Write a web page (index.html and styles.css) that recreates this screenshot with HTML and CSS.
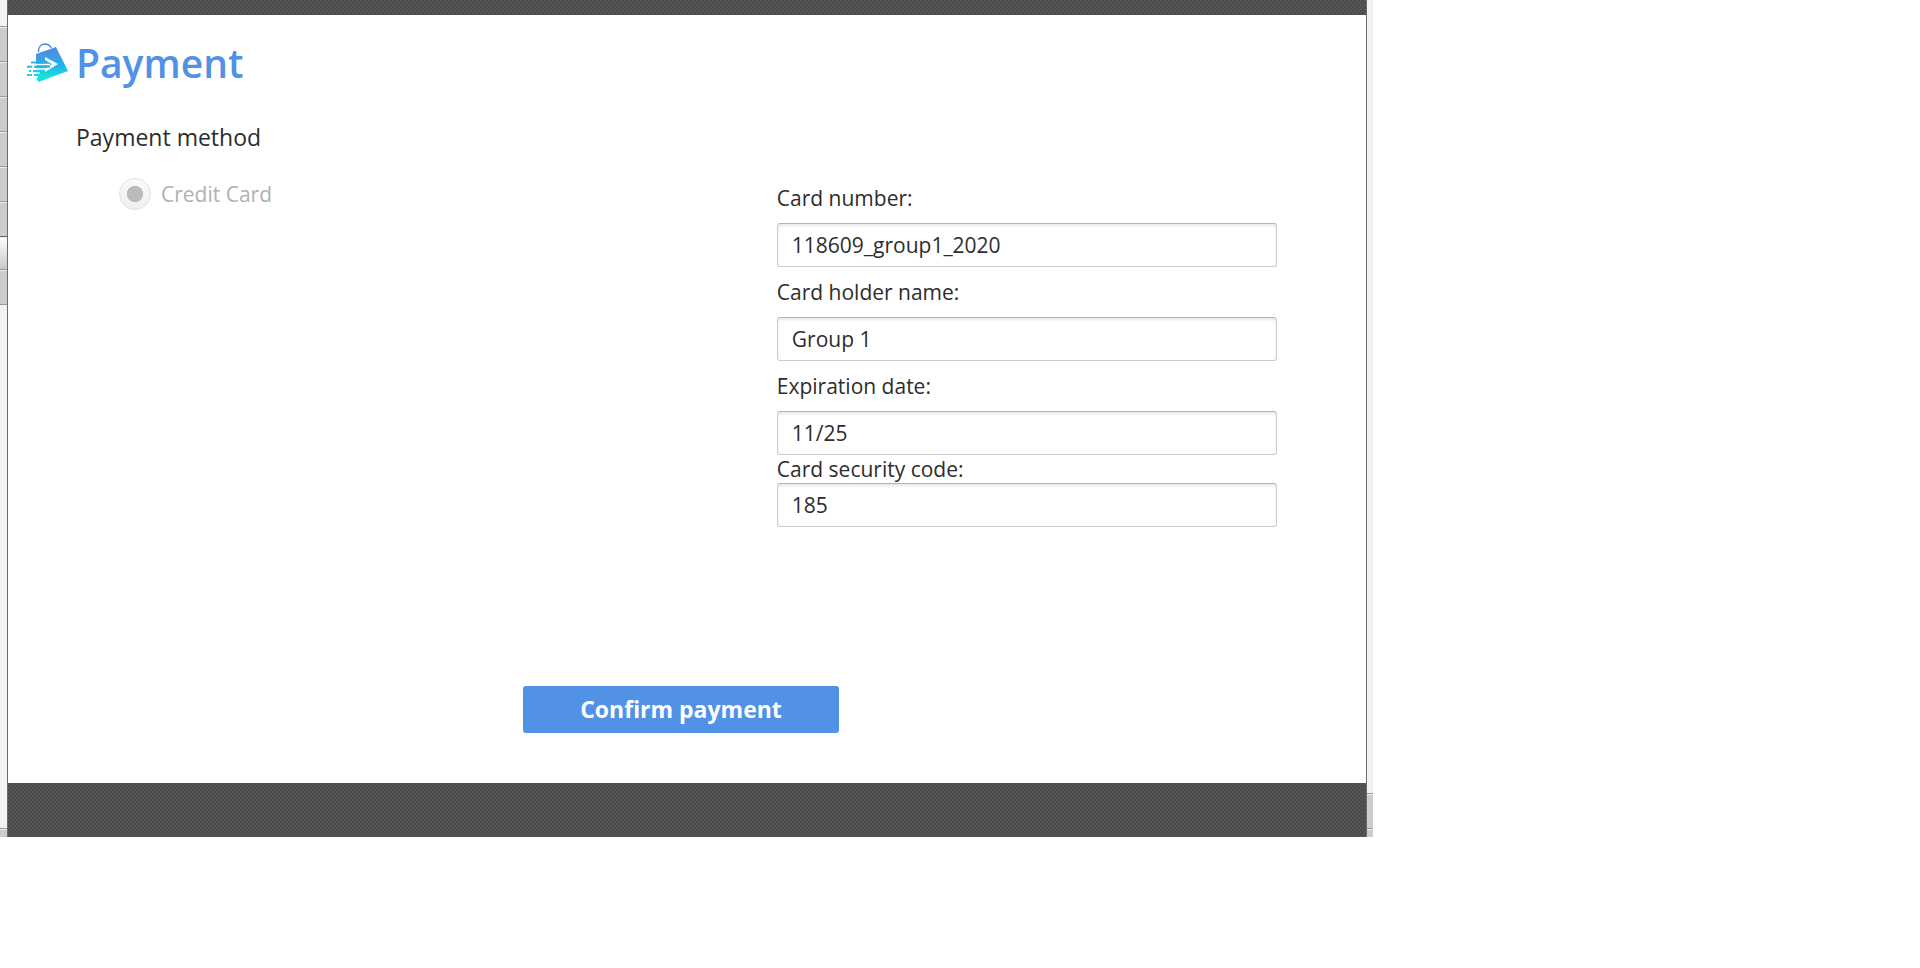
FILE: index.html
```html
<!DOCTYPE html>
<html lang="en">
<head>
<meta charset="utf-8">
<title>Payment</title>
<link rel="stylesheet" href="styles.css">
</head>
<body>
<div class="window">
  <div class="strip strip-left" aria-hidden="true">
    <div class="blank blank-top"></div>
    <div class="cell"></div>
    <div class="cell"></div>
    <div class="cell"></div>
    <div class="cell"></div>
    <div class="cell"></div>
    <div class="cell"></div>
    <div class="cell cell-active"></div>
    <div class="cell"></div>
    <div class="blank blank-fill"></div>
    <div class="cell cell-last"></div>
  </div>
  <main class="panel">
    <div class="bar bar-top"></div>
    <form class="content">
      <header class="header">
        <svg class="logo" viewBox="0 0 42 40" aria-hidden="true">
          <defs>
            <linearGradient id="bag" x1="0" y1="0" x2="0" y2="1">
              <stop offset="0.15" stop-color="#4d8fe6"/>
              <stop offset="0.55" stop-color="#22b4e8"/>
              <stop offset="0.85" stop-color="#1ae0e0"/>
            </linearGradient>
          </defs>
          <path d="M12.500 9C12 4.500 15 1 18.500 1C21.500 1 24 2.500 25.500 5" fill="none" stroke="#4486e0" stroke-width="1.300"/>
          <path d="M10 11L30 4L42 28L12.500 39L10 35Z" fill="url(#bag)"/>
          <path d="M19 14L32 21L19 29L19 26L26 21L19 17Z" fill="#fff"/>
          <path d="M9 21.500H24M7 26H20M8 30H14M6 34H12" stroke="#fff" stroke-width="1.400"/>
          <path d="M5 19.500H21" stroke="#28aee8" stroke-width="1.800"/>
          <path d="M1 23.700H6M8 23.700H24" stroke="#22bde6" stroke-width="2"/>
          <path d="M3 28H5M7 28H19" stroke="#1fcfe2" stroke-width="2"/>
          <path d="M1 32H6M8 32H16" stroke="#1fd8de" stroke-width="2"/>
        </svg>
        <h1 class="title">Payment</h1>
      </header>
      <div class="columns">
        <fieldset class="method">
          <legend class="method-title">Payment method</legend>
          <label class="option">
            <input class="radio" type="radio" name="method" checked disabled>
            <span>Credit Card</span>
          </label>
        </fieldset>
        <div class="fields">
          <label class="label" for="number">Card number:</label>
          <input class="input" id="number" type="text" value="118609_group1_2020">
          <label class="label" for="holder">Card holder name:</label>
          <input class="input" id="holder" type="text" value="Group 1">
          <label class="label" for="expiry">Expiration date:</label>
          <input class="input" id="expiry" type="text" value="11/25">
          <label class="label label-tight" for="code">Card security code:</label>
          <input class="input" id="code" type="text" value="185">
        </div>
      </div>
      <button class="confirm" type="button">Confirm payment</button>
    </form>
    <div class="bar bar-bottom"></div>
  </main>
  <div class="strip strip-right" aria-hidden="true">
    <div class="blank blank-fill"></div>
    <div class="cell"></div>
    <div class="cell cell-last"></div>
  </div>
</div>
</body>
</html>
```
FILE: styles.css
```css
* { box-sizing: border-box; }

body {
  margin: 0;
  background: #fff;
  color: #2d2d2d;
  font-family: "Open Sans", "Noto Sans", sans-serif;
  font-size: 21px;
}

.window {
  display: grid;
  grid-template-columns: 7px 1fr 6px;
  width: 71.5%;
}

.strip {
  display: flex;
  flex-direction: column;
}

.blank { background: #f2f2f2; }
.blank-top { height: 26px; }
.blank-fill { flex: 1; }

.cell {
  height: 35px;
  background: #ccc;
  border-top: 1px solid #999;
  box-shadow: inset 0 1px #eee;
}

.cell-active {
  height: 33px;
  background: linear-gradient(#fff, #c8c8c8);
  border-top-color: #666;
}

.cell-active + .cell {
  height: 36px;
  border-bottom: 1px solid #999;
}

.cell-last { height: 9px; }

.panel {
  border: solid #6c6c6c;
  border-width: 0 1px;
}

.bar {
  background: repeating-conic-gradient(#4b4b4b 0 25%, #555 0 50%) 0 0 / 4px 4px;
}

.bar-top { height: 15px; }
.bar-bottom { height: 54px; }

.content {
  display: flex;
  flex-direction: column;
  padding: 18px 89px 50px 18px;
}

.header {
  display: flex;
  align-items: center;
  gap: 8px;
  height: 60px;
}

.logo {
  width: 42px;
  height: 40px;
}

.title {
  margin: 0;
  color: #5191e6;
  font-size: 39px;
  font-weight: 600;
  line-height: 60px;
}

.columns {
  display: grid;
  grid-template-columns: 1fr 500px;
  padding-top: 26px;
}

.method {
  margin: 0;
  padding: 0 0 0 50px;
  border: 0;
}

.method-title {
  padding: 0;
  font-size: 23px;
  line-height: 36px;
}

.option {
  display: flex;
  align-items: center;
  gap: 10px;
  padding: 23px 0 0 43px;
  color: #b1b1b1;
}

.radio {
  appearance: none;
  width: 32px;
  height: 32px;
  margin: 0;
  border: 1px solid #e2e2e2;
  border-radius: 50%;
  background: radial-gradient(circle, #bbb 0 8px, transparent 8px), linear-gradient(#fafafa, #efefef);
}

.fields {
  display: flex;
  flex-direction: column;
  padding-top: 54px;
}

.label { line-height: 50px; }
.label-tight { line-height: 28px; }

.input {
  height: 44px;
  padding: 0 14px;
  border: 1px solid #ccc;
  border-top-color: #b4b4b4;
  border-radius: 3px;
  background: #fff;
  box-shadow: inset 0 2px 3px #e8e8e8;
  color: #2d2d2d;
  font: inherit;
}

.confirm {
  width: 316px;
  height: 47px;
  margin: 159px 0 0 497px;
  padding: 0 0 2px;
  border: 0;
  border-radius: 3px;
  background: #5191e6;
  color: #fff;
  font: 700 23px "Open Sans", "Noto Sans", sans-serif;
}
```
